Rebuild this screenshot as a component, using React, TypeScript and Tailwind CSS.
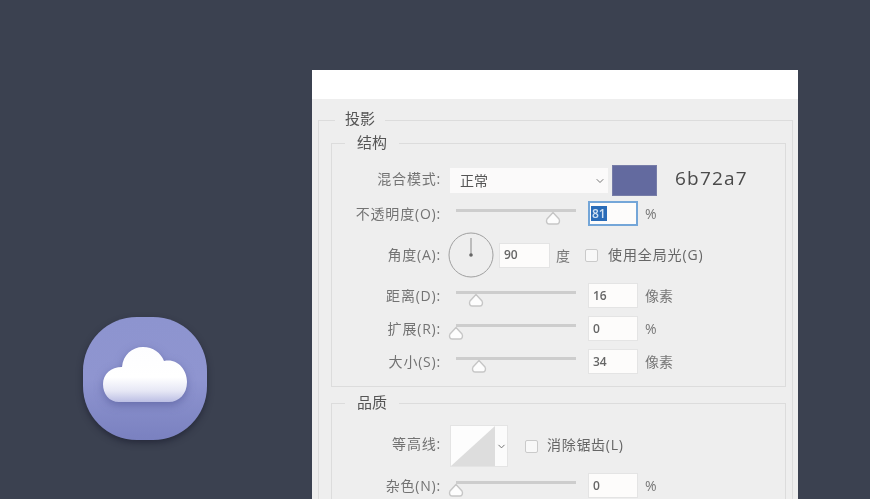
import { ChevronDown } from 'lucide-react';

const font = "font-['Open_Sans','Noto_Sans_CJK_SC',sans-serif]";

function Label({ text, raised }: { text: string; raised?: boolean }) {
  return (
    <span className={`w-[109px] shrink-0 text-right text-[14px] leading-none tracking-[0.8px] text-[#737373] ${raised ? 'mb-[4px]' : ''}`}>
      {text}
    </span>
  );
}

function NumberBox({ value, selected }: { value: string; selected?: boolean }) {
  return (
    <div
      className={`flex h-[25px] w-[50px] shrink-0 items-center bg-[#fdfcfb] text-[12px] font-semibold text-[#666] ${
        selected ? 'border-2 border-[#74a6d8] pl-[1px]' : 'border border-[#e4e4e4] pl-[4px]'
      }`}
    >
      {selected ? <span className="bg-[#2a6cb8] px-px leading-[15px] text-[#cfe0f2]">{value}</span> : value}
    </div>
  );
}

function SliderRow({ label, value, unit, thumb, selected }: { label: string; value: string; unit: string; thumb: number; selected?: boolean }) {
  return (
    <div className="flex h-[25px] items-center">
      <Label text={label} />
      <div className="relative ml-[15px] mb-[7px] h-[3px] w-[120px] shrink-0 bg-[#cdcdcd]">
        <svg className="absolute top-[2px]" style={{ left: thumb - 8 }} width="16" height="14" viewBox="0 0 16 14">
          <path
            d="M8 1.5 L14 8 C15 10 14.5 13 12 13 H4 C1.5 13 1 10 2 8 Z"
            fill="#fdfdfd"
            stroke="#c6c6c6"
            strokeWidth="1.4"
            strokeLinejoin="round"
          />
        </svg>
      </div>
      <div className="ml-[12px]">
        <NumberBox value={value} selected={selected} />
      </div>
      <span className="ml-[7px] text-[14px] text-[#777]">{unit}</span>
    </div>
  );
}

function Checkbox() {
  return <div className="h-[13px] w-[13px] shrink-0 rounded-[2px] border border-[#cacaca] bg-[#f8f8f8]" />;
}

function Cloud() {
  return (
    <svg width="84" height="55" viewBox="0 0 84 55" className="mt-[-8px] drop-shadow-[0_3px_4px_rgba(70,75,140,0.5)]">
      <defs>
        <linearGradient id="cloud" x1="0" y1="0" x2="0" y2="1">
          <stop offset="0" stopColor="#fdfdff" />
          <stop offset="0.55" stopColor="#ffffff" />
          <stop offset="0.8" stopColor="#e6e7f5" />
          <stop offset="1" stopColor="#bcbfe4" />
        </linearGradient>
      </defs>
      <path
        d="M16 55 C6 55 0 47 0 37 C0 27 8 20 19 20 C20 8 29 0 40 0 C50 0 58 6 61 14 C74 11 84 22 84 35 C84 47 76 55 66 55 Z"
        fill="url(#cloud)"
      />
    </svg>
  );
}

export default function App() {
  return (
    <div className={`flex h-[499px] w-[870px] overflow-hidden bg-[#3b4150] pl-[83px] ${font}`}>
      <div className="mt-[317px] flex h-[123px] w-[124px] shrink-0 items-center justify-center rounded-[54px] bg-gradient-to-b from-[#8d94cf] via-[#8f95d0] to-[#7a81c0] shadow-[0_3px_6px_rgba(30,33,50,0.7)] blur-[0.6px]">
        <Cloud />
      </div>

      <div className="ml-[105px] mt-[70px] flex h-[429px] w-[486px] shrink-0 flex-col overflow-hidden bg-[#eeeeee] blur-[0.6px]">
        <div className="h-[29px] shrink-0 bg-white" />

        <fieldset className="ml-[6px] mr-[5px] mt-[10px] border border-[#dcdcdc] pl-[12px] pr-[6px]">
          <legend className="ml-[4px] px-[10px] pb-[4px] text-[15px] leading-[18px] text-[#555]">投影</legend>

          <fieldset className="mt-[2px] border border-[#dcdcdc] pb-[12px]">
            <legend className="ml-[13px] px-[12px] pb-[2px] text-[15px] leading-[18px] text-[#555]">结构</legend>

            <div className="mt-[12px] flex h-[31px] items-center">
              <Label text="混合模式:" raised />
              <div className="ml-[9px] flex h-[25px] w-[158px] shrink-0 items-center justify-between bg-[#fbfafa] pl-[10px] pr-[2px] text-[14px] text-[#555]">
                正常
                <ChevronDown size={12} className="text-[#777]" />
              </div>
              <div className="ml-[4px] h-[31px] w-[45px] shrink-0 border border-[#777da8] bg-[#636a9f]" />
              <span className="ml-[18px] mb-[4px] text-[19px] tracking-[1.2px] text-[#4a4a4a]">6b72a7</span>
            </div>

            <div className="mt-[5px]">
              <SliderRow label="不透明度(O):" value="81" unit="%" thumb={97} selected />
            </div>

            <div className="mt-[6px] flex h-[46px] items-center">
              <Label text="角度(A):" />
              <svg className="ml-[7px] shrink-0" width="46" height="46" viewBox="0 0 46 46">
                <circle cx="23" cy="23" r="22" fill="none" stroke="#a0a0a0" strokeWidth="1" />
                <path d="M23 6 V23" stroke="#8a8a8a" strokeWidth="1" />
                <circle cx="23" cy="23" r="1.8" fill="#666" />
              </svg>
              <div className="ml-[5px] flex h-[25px] w-[51px] shrink-0 items-center border border-[#e4e4e4] bg-[#fdfcfb] pl-[4px] text-[12px] font-semibold text-[#666]">90</div>
              <span className="ml-[6px] text-[14px] text-[#777]">度</span>
              <div className="ml-[15px]">
                <Checkbox />
              </div>
              <span className="ml-[10px] mb-[2px] text-[14px] tracking-[0.9px] text-[#666]">使用全局光(G)</span>
            </div>

            <div className="mt-[5px]">
              <SliderRow label="距离(D):" value="16" unit="像素" thumb={20} />
            </div>
            <div className="mt-[8px]">
              <SliderRow label="扩展(R):" value="0" unit="%" thumb={0} />
            </div>
            <div className="mt-[8px]">
              <SliderRow label="大小(S):" value="34" unit="像素" thumb={23} />
            </div>
          </fieldset>

          <fieldset className="mt-[6px] border border-[#dcdcdc] pb-[10px]">
            <legend className="ml-[13px] px-[12px] pb-[2px] text-[15px] leading-[18px] text-[#555]">品质</legend>

            <div className="mt-[12px] flex h-[42px] items-center">
              <Label text="等高线:" raised />
              <div className="ml-[9px] flex h-[42px] w-[58px] shrink-0 border border-[#e4e4e4] bg-[#fbfbfb]">
                <svg width="44" height="40" viewBox="0 0 44 40" className="shrink-0">
                  <rect width="44" height="40" fill="#fdfdfd" />
                  <path d="M0 40 L44 0 V40 Z" fill="#dddddd" />
                </svg>
                <div className="flex flex-1 items-center justify-center">
                  <ChevronDown size={11} className="text-[#666]" />
                </div>
              </div>
              <div className="ml-[17px]">
                <Checkbox />
              </div>
              <span className="ml-[9px] mb-[4px] text-[14px] tracking-[0.7px] text-[#666]">消除锯齿(L)</span>
            </div>

            <div className="mt-[6px]">
              <SliderRow label="杂色(N):" value="0" unit="%" thumb={0} />
            </div>
          </fieldset>
        </fieldset>
      </div>
    </div>
  );
}
